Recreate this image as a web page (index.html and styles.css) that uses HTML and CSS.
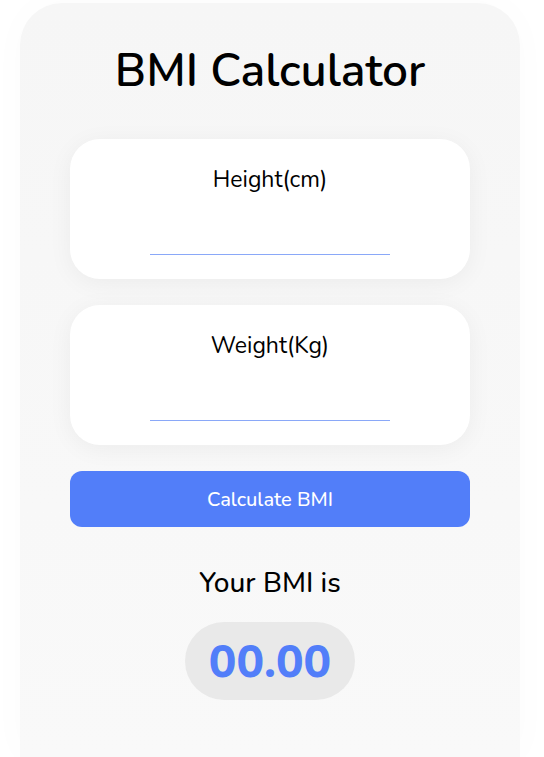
FILE: index.html
```html
<!DOCTYPE html>
<html>
<head>
<meta charset="utf-8">
<link rel="stylesheet" href="styles.css">
</head>
<body>
<div class="card">
  <h1 class="title">BMI Calculator</h1>
  <div class="field">
    <label class="label" for="h">Height(cm)</label>
    <input class="input" id="h" type="text">
  </div>
  <div class="field">
    <label class="label" for="w">Weight(Kg)</label>
    <input class="input" id="w" type="text">
  </div>
  <button class="btn">Calculate BMI</button>
  <div class="result-label">Your BMI is</div>
  <div class="result">00.00</div>
</div>
</body>
</html>
```
FILE: styles.css
```css
html, body {
  margin: 0;
  padding: 0;
  background: #ffffff;
  font-family: "Nunito", "Lato", "Noto Sans", sans-serif;
  height: 757px;
  overflow: hidden;
}
body {
  padding: 3px 0 0 20px;
  box-sizing: border-box;
}
.card {
  width: 500px;
  height: 754px;
  box-sizing: border-box;
  background: linear-gradient(#f6f6f6, #f9f9f9);
  border-radius: 42px 42px 0 0;
  padding: 38px 50px 0;
  display: flex;
  flex-direction: column;
  align-items: center;
  box-shadow: 0 0 40px rgba(0,0,0,0.02);
}
.title {
  margin: 0;
  font-size: 46px;
  font-weight: 600;
  color: #000;
  line-height: 60px;
}
.field {
  margin-top: 38px;
  width: 400px;
  height: 140px;
  box-sizing: border-box;
  background: #ffffff;
  border-radius: 30px;
  box-shadow: 0 4px 25px rgba(0,0,0,0.05);
  display: flex;
  flex-direction: column;
  align-items: center;
  padding-top: 27px;
}
.field + .field {
  margin-top: 26px;
}
.label {
  font-size: 23px;
  font-weight: 400;
  line-height: 28px;
  color: #000;
}
.input {
  margin-top: 26px;
  width: 240px;
  height: 35px;
  box-sizing: border-box;
  border: none;
  border-bottom: 1.5px solid #8aa8f8;
  background: #ffffff;
  outline: none;
}
.btn {
  margin-top: 26px;
  width: 400px;
  height: 56px;
  border: none;
  border-radius: 12px;
  background: #527ef9;
  color: #fff;
  font-family: inherit;
  font-size: 20px;
  font-weight: 500;
}
.result-label {
  margin-top: 39px;
  font-size: 28px;
  font-weight: 500;
  line-height: 34px;
  color: #000;
}
.result {
  margin-top: 22px;
  width: 170px;
  height: 78px;
  border-radius: 39px;
  background: #e9e9e9;
  color: #527ef9;
  font-size: 46px;
  font-weight: 800;
  display: flex;
  align-items: center;
  justify-content: center;
}
```
